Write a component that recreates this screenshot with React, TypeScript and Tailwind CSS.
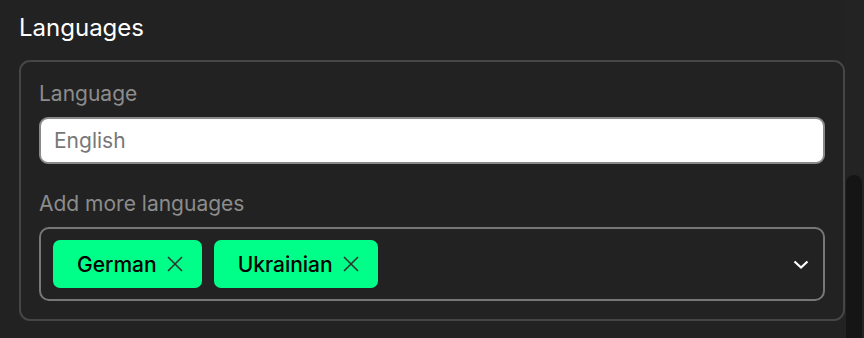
import React from "react";

const font = { fontFamily: "Inter, 'Noto Sans', sans-serif" };

function Chip({ label }: { label: string }) {
  return (
    <div className="flex h-12 items-center gap-[10px] rounded-[7px] bg-[#00ff88] pl-6 pr-[19px]">
      <span className="text-[21px] font-medium leading-none text-black">{label}</span>
      <svg width="16" height="16" viewBox="0 0 16 16" fill="none" stroke="#333" strokeWidth="1.6">
        <line x1="1" y1="1" x2="15" y2="15" />
        <line x1="15" y1="1" x2="1" y2="15" />
      </svg>
    </div>
  );
}

export default function App() {
  return (
    <div className="flex h-[338px] w-[864px] overflow-hidden bg-[#222222]" style={font}>
      {/* Main content */}
      <div className="flex-1 pl-[19px] pt-3">
        <h2 className="text-[24px] leading-8 text-white">Languages</h2>

        <div className="mt-4 rounded-[11px] border-2 border-[#464646] px-[18px] pb-[18px] pt-[18px]">
          <label className="block text-[21px] leading-7 text-[#8c8c8c]">Language</label>
          <div className="mt-[9px] flex h-[47px] items-center rounded-[9px] border-2 border-[#8a8a8a] bg-white px-[13px]">
            <span className="text-[21px] text-[#777]">English</span>
          </div>

          <label className="mt-[26px] block text-[21px] leading-7 text-[#8c8c8c]">
            Add more languages
          </label>
          <div className="mt-[9px] flex h-[74px] items-center justify-between rounded-[10px] border-2 border-[#777] pl-3 pr-[14px]">
            <div className="flex gap-3">
              <Chip label="German" />
              <Chip label="Ukrainian" />
            </div>
            <svg width="16" height="9" viewBox="0 0 16 9" fill="none" stroke="white" strokeWidth="2.2">
              <polyline points="1.5,1.5 8,7.5 14.5,1.5" />
            </svg>
          </div>
        </div>
      </div>

      {/* Scrollbar */}
      <div className="flex w-[19px] flex-col bg-[#232323] pt-[175px]">
        <div className="ml-px w-4 flex-1 rounded-t-lg bg-[#151515]" />
      </div>
    </div>
  );
}
